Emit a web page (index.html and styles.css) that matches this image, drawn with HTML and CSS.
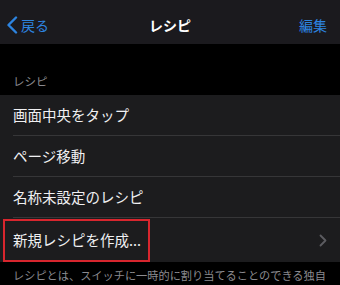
FILE: index.html
```html
<!DOCTYPE html>
<html lang="ja">
<head>
<meta charset="utf-8">
<link rel="stylesheet" href="styles.css">
</head>
<body>
<header class="nav">
  <div class="nav-left">
    <svg class="back-chevron" width="12" height="18" viewBox="0 0 12 18"><path d="M10 1.5 L2.5 9 L10 16.5" fill="none" stroke="#2d84e0" stroke-width="2.4" stroke-linecap="round" stroke-linejoin="round"/></svg>
    <span class="nav-link">戻る</span>
  </div>
  <div class="nav-title">レシピ</div>
  <div class="nav-right"><span class="nav-link">編集</span></div>
</header>
<div class="section-header">レシピ</div>
<ul class="list">
  <li class="row"><span class="row-text">画面中央をタップ</span></li>
  <li class="row"><span class="row-text">ページ移動</span></li>
  <li class="row"><span class="row-text">名称未設定のレシピ</span></li>
  <li class="row row-last">
    <span class="row-text">新規レシピを作成...</span>
    <svg class="row-chevron" width="8" height="13" viewBox="0 0 8 13"><path d="M1.5 1.5 L6.5 6.5 L1.5 11.5" fill="none" stroke="#5c5c61" stroke-width="1.8" stroke-linecap="round" stroke-linejoin="round"/></svg>
    <div class="highlight"></div>
  </li>
</ul>
<p class="footer">レシピとは、スイッチに一時的に割り当てることのできる独自の操作のまとまりです。「ブックを開く」「ページをめくる」などの操作を、ボタンひとつで実行できます。</p>
</body>
</html>
```
FILE: styles.css
```css
* { box-sizing: border-box; }
html, body {
  margin: 0;
  padding: 0;
  background: #000;
  font-family: "Noto Sans CJK JP", "Noto Sans", sans-serif;
  overflow: hidden;
}
.nav {
  height: 44px;
  padding-top: 6px;
  background: #1b1a1e;
  display: grid;
  grid-template-columns: 1fr auto 1fr;
  align-items: center;
}
.nav-left {
  display: flex;
  align-items: center;
  padding-left: 6px;
}
.back-chevron { display: block; margin-right: 3px; }
.nav-link {
  color: #2d84e0;
  font-size: 14px;
  line-height: 20px;
}
.nav-title {
  color: #fff;
  font-size: 14px;
  font-weight: 700;
  line-height: 20px;
}
.nav-right {
  display: flex;
  justify-content: flex-end;
  padding-right: 13px;
}
.section-header {
  padding: 29px 13px 5px;
  font-size: 11.5px;
  line-height: 17px;
  color: #8a8a8f;
}
.list {
  list-style: none;
  margin: 0;
  padding: 0 0 0 13px;
  background: #1c1c1e;
}
.row {
  position: relative;
  height: 41px;
  border-bottom: 1px solid #363638;
  display: flex;
  align-items: center;
  padding-right: 13px;
}
.row-last {
  height: 44px;
  border-bottom: none;
}
.row-text {
  flex: 1;
  color: #f0f0f2;
  font-size: 14.5px;
  line-height: 20px;
}
.row-chevron { display: block; }
.highlight {
  position: absolute;
  left: -10px;
  top: 1px;
  width: 147px;
  height: 43px;
  border: 2px solid #d8262e;
}
.footer {
  margin: 0;
  padding: 5px 13px 0;
  font-size: 11.2px;
  line-height: 16px;
  color: #8a8a8f;
}
```
